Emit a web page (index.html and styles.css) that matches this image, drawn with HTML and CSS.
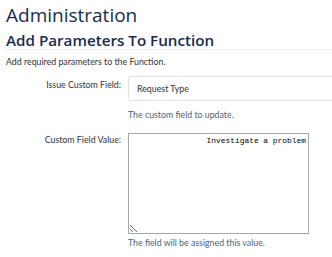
FILE: index.html
```html
<!DOCTYPE html>
<html>
<head>
<meta charset="utf-8">
<link rel="stylesheet" href="styles.css">
</head>
<body>
<div class="page">
  <h1 class="title">Administration</h1>
  <h2 class="section">Add Parameters To Function</h2>
  <p class="intro">Add required parameters to the Function.</p>
  <div class="form">
    <div class="row">
      <label class="label">Issue Custom Field:</label>
      <div class="field">
        <div class="select">Request Type</div>
        <div class="help">The custom field to update.</div>
      </div>
    </div>
    <div class="row row-area">
      <label class="label">Custom Field Value:</label>
      <div class="field">
        <textarea class="area" dir="rtl">Investigate a problem</textarea>
        <div class="help">The field will be assigned this value.</div>
      </div>
    </div>
  </div>
</div>
</body>
</html>
```
FILE: styles.css
```css
html, body {
  margin: 0;
  padding: 0;
  background: #fff;
  overflow: hidden;
}
body {
  font-family: "Open Sans", "Noto Sans", sans-serif;
  color: #172b4d;
}
.page {
  padding: 0 0 0 6px;
  width: 360px;
}
.title {
  margin: 0;
  padding-top: 1px;
  font-size: 19px;
  font-weight: 400;
  line-height: 28px;
  color: #172b4d;
}
.section {
  margin: 3px 0 0 0;
  font-size: 15.2px;
  font-weight: 600;
  line-height: 17px;
  border-bottom: 1px solid #ebecf0;
  color: #172b4d;
}
.intro,
.label,
.select,
.help {
  font-family: "Lato", "Open Sans", sans-serif;
  font-size: 8.8px;
}
.intro {
  margin: 6px 0 0 0;
  line-height: 12px;
  color: #333;
}
.form {
  margin-top: 8px;
}
.row {
  display: flex;
  align-items: flex-start;
}
.label {
  width: 115px;
  flex: none;
  text-align: right;
  line-height: 12px;
  color: #333;
  padding-top: 3px;
}
.field {
  margin-left: 7px;
  flex: 1;
}
.select {
  height: 25px;
  box-sizing: border-box;
  border: 1px solid #dfe1e6;
  border-radius: 3px 0 0 3px;
  line-height: 23px;
  padding-left: 8px;
  color: #333;
  width: 220px;
}
.help {
  line-height: 12px;
  color: #505f79;
  margin-top: 8px;
}
.row-area {
  margin-top: 12px;
}
.row-area .label {
  padding-top: 1px;
}
.area {
  display: block;
  width: 181px;
  height: 101px;
  box-sizing: border-box;
  margin: 0;
  border: 1px solid #a9a9a9;
  font-family: "Liberation Mono", monospace;
  font-size: 7.9px;
  line-height: 9px;
  padding: 2px;
  color: #000;
  resize: both;
}
.row-area .help {
  margin-top: 3px;
}
```
